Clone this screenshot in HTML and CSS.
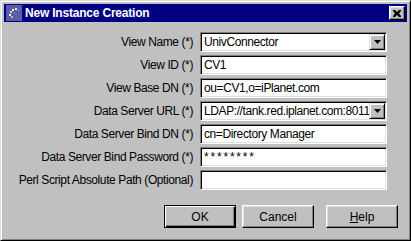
FILE: index.html
```html
<!DOCTYPE html>
<html lang="en">
<head>
  <meta charset="UTF-8" />
  <title>New Instance Creation</title>
  <link rel="stylesheet" href="styles.css">
</head>
<body>

  <div class="window">
    <!-- Title bar -->
    <div class="titlebar">
      <svg class="app-icon" width="16" height="16" viewBox="0 0 16 16">
        <rect width="16" height="16" fill="#5c5ca4"/>
        <rect x="9" y="3" width="2" height="2" fill="#e8e8f4"/>
        <rect x="6" y="4" width="2" height="2" fill="#ffffff"/>
        <rect x="4" y="6" width="2" height="2" fill="#d0d0e8"/>
        <rect x="3" y="9" width="2" height="2" fill="#ffffff"/>
        <rect x="5" y="11" width="2" height="2" fill="#b8b8dc"/>
        <rect x="12" y="5" width="1" height="1" fill="#c8c8e4"/>
        <rect x="8" y="8" width="1" height="1" fill="#9c9cd0"/>
      </svg>
      <span class="title">New Instance Creation</span>
      <div class="close">
        <svg width="8" height="7" viewBox="0 0 8 7">
          <path d="M0 0h2l2 2 2-2h2v1l-2 2.5 2 2.5v1h-2l-2-2-2 2h-2v-1l2-2.5-2-2.5z" fill="#000"/>
        </svg>
      </div>
    </div>

    <!-- Form -->
    <div class="form">
      <div class="label">View Name (*)</div>
      <div class="field combo">
        <span class="value">UnivConnector</span>
        <span class="drop"><svg width="7" height="4" viewBox="0 0 7 4"><path d="M0 0h7l-3.5 4z" fill="#000"/></svg></span>
      </div>

      <div class="label">View ID (*)</div>
      <div class="field"><span class="value">CV1</span></div>

      <div class="label">View Base DN (*)</div>
      <div class="field"><span class="value">ou=CV1,o=iPlanet.com</span></div>

      <div class="label">Data Server URL (*)</div>
      <div class="field combo">
        <span class="value">LDAP://tank.red.iplanet.com:8011</span>
        <span class="drop"><svg width="7" height="4" viewBox="0 0 7 4"><path d="M0 0h7l-3.5 4z" fill="#000"/></svg></span>
      </div>

      <div class="label">Data Server Bind DN (*)</div>
      <div class="field"><span class="value">cn=Directory Manager</span></div>

      <div class="label">Data Server Bind Password (*)</div>
      <div class="field"><span class="value secret">********</span></div>

      <div class="label">Perl Script Absolute Path (Optional)</div>
      <div class="field"><span class="value"></span></div>
    </div>

    <!-- Buttons -->
    <div class="buttons">
      <div class="btn default"><span class="face">OK</span></div>
      <div class="btn"><span class="face">Cancel</span></div>
      <div class="btn help"><span class="face"><u>H</u>elp</span></div>
    </div>
  </div>

</body>
</html>
```

FILE: styles.css
```css
* {
  box-sizing: border-box;
  margin: 0;
  padding: 0;
}

body {
  font-family: 'Liberation Sans', Arial, sans-serif;
  font-size: 12px;
  color: #000;
  background: #c0c0c0;
}

/* Window frame */
.window {
  width: 411px;
  height: 241px;
  background: #c0c0c0;
  border: 1px solid;
  border-color: #dfdfdf #000 #000 #dfdfdf;
  box-shadow: inset 1px 1px #fff, inset -1px -1px #808080;
  padding: 3px;
}

.titlebar {
  height: 18px;
  background: #000080;
  display: flex;
  align-items: center;
  padding: 0 2px;
}

.app-icon {
  display: block;
  flex-shrink: 0;
}

.title {
  flex: 1;
  margin-left: 3px;
  color: #fff;
  font-weight: bold;
  font-size: 12px;
  letter-spacing: -0.2px;
}

.close {
  width: 16px;
  height: 14px;
  background: #c0c0c0;
  border: 1px solid;
  border-color: #fff #000 #000 #fff;
  box-shadow: inset -1px -1px #808080, inset 1px 1px #dfdfdf;
  display: flex;
  align-items: center;
  justify-content: center;
}

.close svg {
  display: block;
}

/* Form grid */
.form {
  display: grid;
  grid-template-columns: 189px 187px;
  column-gap: 7px;
  row-gap: 3px;
  grid-auto-rows: 20px;
  padding-top: 10px;
}

.label {
  text-align: right;
  line-height: 20px;
  white-space: nowrap;
  letter-spacing: -0.4px;
}

.field {
  height: 20px;
  background: #fff;
  border: 1px solid;
  border-color: #808080 #fff #fff #808080;
  box-shadow: inset 1px 1px #000, inset -1px -1px #dfdfdf;
  padding: 1px 2px 1px 3px;
  display: flex;
  align-items: center;
}

.value {
  flex: 1;
  line-height: 16px;
  white-space: nowrap;
  overflow: hidden;
  letter-spacing: -0.4px;
}

.value.secret {
  letter-spacing: 1.8px;
}

.combo {
  padding-right: 1px;
}

.drop {
  width: 16px;
  height: 16px;
  background: #c0c0c0;
  border: 1px solid;
  border-color: #dfdfdf #000 #000 #dfdfdf;
  box-shadow: inset 1px 1px #fff, inset -1px -1px #808080;
  display: flex;
  align-items: center;
  justify-content: center;
  flex-shrink: 0;
}

.drop svg {
  display: block;
}

/* Buttons */
.buttons {
  display: flex;
  margin-top: 15px;
  padding-left: 160px;
  gap: 6px;
}

.btn {
  width: 72px;
  height: 23px;
  background: #c0c0c0;
  border: 1px solid;
  border-color: #fff #000 #000 #fff;
  box-shadow: inset -1px -1px #808080, inset 1px 1px #dfdfdf;
  display: flex;
  align-items: center;
  justify-content: center;
}

.btn.default {
  border: 1px solid #000;
  box-shadow: inset 1px 1px #fff, inset -1px -1px #000, inset -2px -2px #808080;
}

.btn.help {
  margin-left: 6px;
}

.face {
  line-height: 16px;
}
```
